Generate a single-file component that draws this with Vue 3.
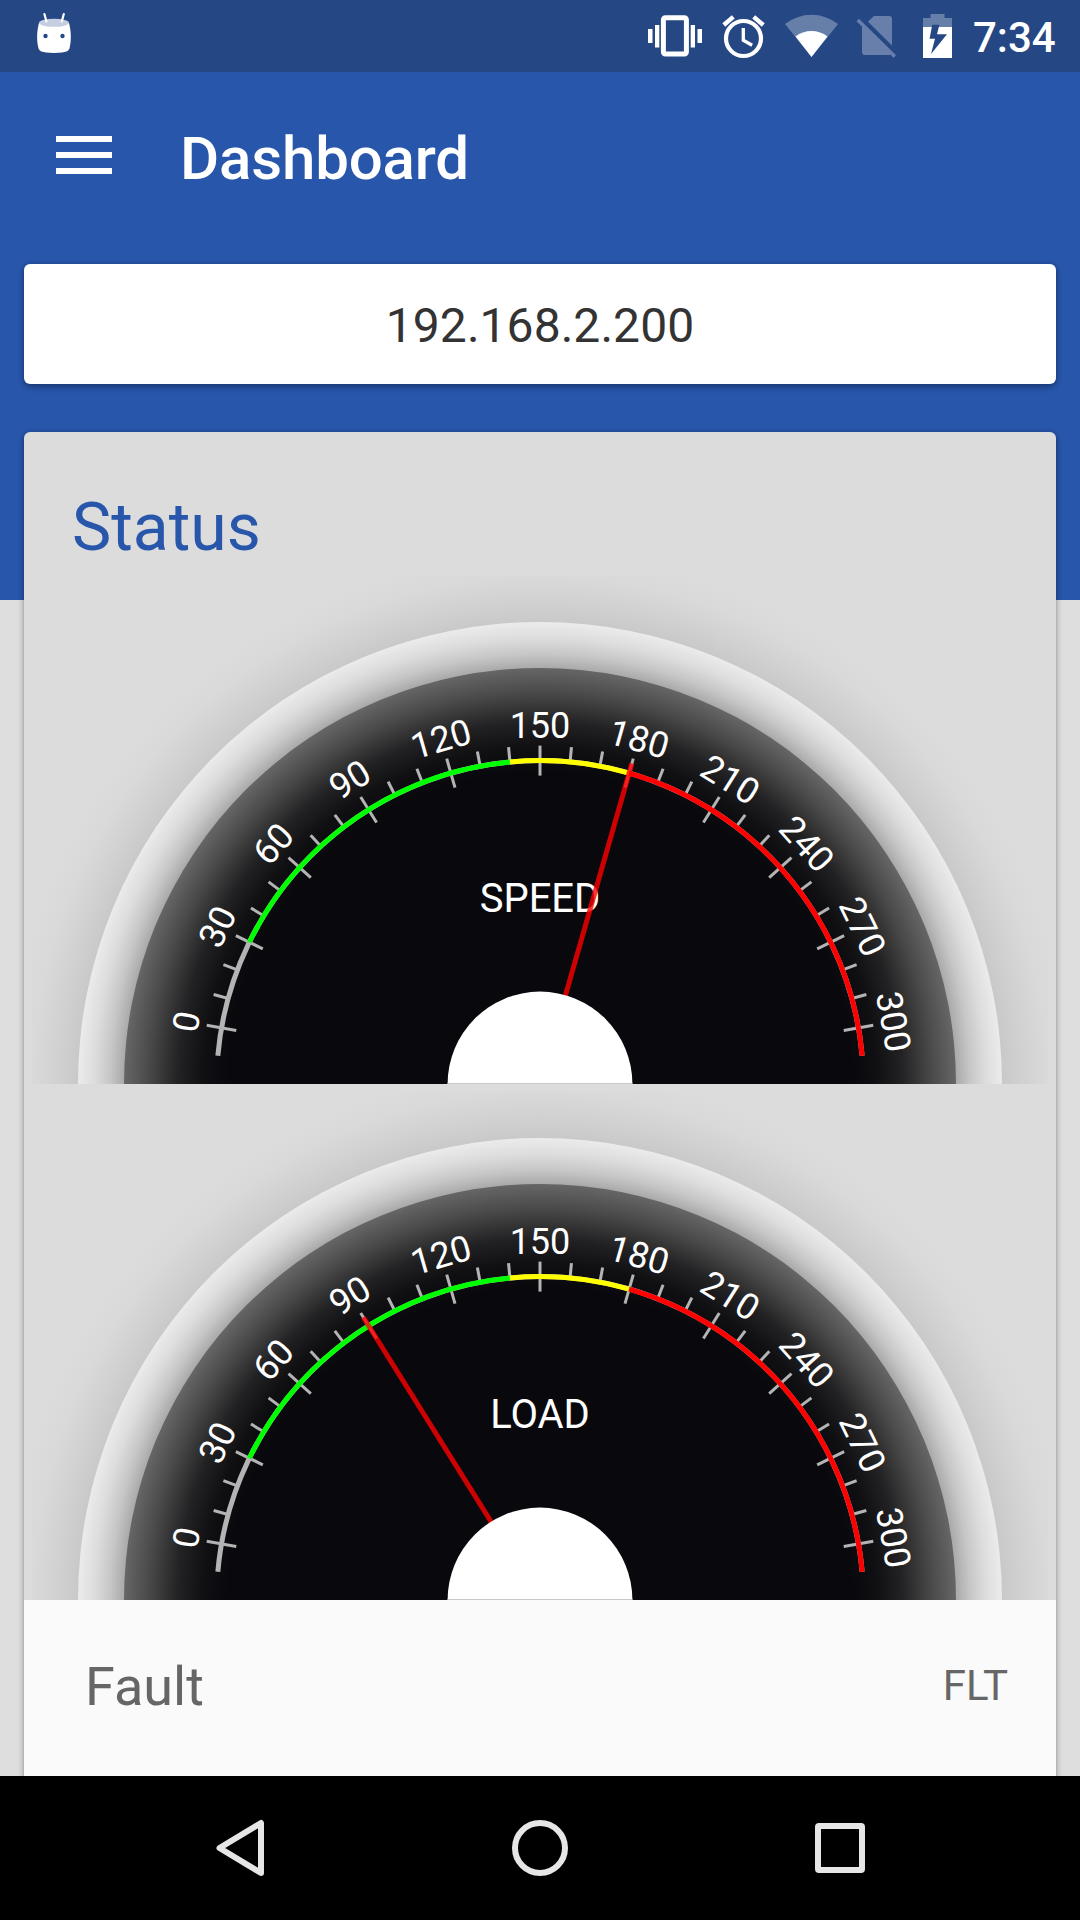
<script setup>
const CX = 516
const CY = 516
const SCALE_R = 323.4
const MAX = 300
const STEP = 10
const MAJOR = 30

const gauges = [
  { label: 'SPEED', value: 180 },
  { label: 'LOAD', value: 90 },
]

const angleOf = (value) => 10 + (value / MAX) * 160

const point = (angle, r) => {
  const a = (angle * Math.PI) / 180
  return { x: CX - Math.cos(a) * r, y: CY - Math.sin(a) * r }
}

const segment = (angle, r1, r2) => {
  const a = point(angle, r1)
  const b = point(angle, r2)
  return { x1: a.x, y1: a.y, x2: b.x, y2: b.y }
}

const arc = (from, to) => {
  const a = point(from, SCALE_R)
  const b = point(to, SCALE_R)
  return `M${a.x} ${a.y} A${SCALE_R} ${SCALE_R} 0 0 1 ${b.x} ${b.y}`
}

const ticks = []
const labels = []
for (let v = 0; v <= MAX; v += STEP) {
  const major = v % MAJOR === 0
  const angle = angleOf(v)
  ticks.push(segment(angle, major ? SCALE_R - 15 : SCALE_R, SCALE_R + 15))
  if (major) labels.push({ text: v, angle: angle - 90 })
}

const ranges = [
  { color: '#b4b4b4', d: arc(5, 175) },
  { color: '#00ff00', d: arc(angleOf(30), angleOf(140)) },
  { color: '#ffff00', d: arc(angleOf(140), angleOf(180)) },
  { color: '#ff0000', d: arc(angleOf(180), 175) },
]
</script>

<template>
  <div class="screen">
    <header class="status-bar">
      <svg class="app-icon" width="36" height="72" viewBox="36 0 36 72">
        <path d="M39 23C37 30 36.400 40 38.300 47.500C39 51 41 52.900 54 52.900S69 51 69.700 47.500C71.600 40 71 30 69 23Z" fill="#fff" />
        <ellipse cx="54" cy="22.800" rx="15" ry="4" fill="#c5cde0" />
        <path d="M44.400 14 46.400 21.500M63.800 14 61.800 21.500" stroke="#fff" stroke-width="2.200" stroke-linecap="round" />
        <circle cx="45.500" cy="36" r="2.200" fill="#254885" />
        <circle cx="62.500" cy="36" r="2.200" fill="#254885" />
      </svg>
      <div class="system">
        <svg class="vibrate" width="54" height="72" viewBox="648 0 54 72" fill="#fff">
          <rect x="663.400" y="17.700" width="23" height="36.300" rx="2" fill="none" stroke="#fff" stroke-width="5" />
          <path d="M648 29h4.500v14H648zM655 25h4.300v22.500H655zM690.700 25h4.300v22.500h-4.300zM697.500 29h4.500v14h-4.500z" />
        </svg>
        <svg class="alarm" width="43" height="72" viewBox="722 0 43 72" fill="none" stroke="#fff">
          <circle cx="743.500" cy="38.500" r="17.500" stroke-width="4.200" />
          <path d="M743.300 28v12.300l8.800 5" stroke-width="3.300" />
          <path d="M723.800 25 733.300 16.800M753.700 16.800 763.300 25" stroke-width="4.400" />
        </svg>
        <svg class="wifi" width="53" height="72" viewBox="785 0 53 72" fill="#fff">
          <path d="M811.500 57 785 24A43 43 0 0 1 838 24Z" opacity=".3" />
          <path d="M811.500 57 795.500 36.500A26 26 0 0 1 827.500 36.500Z" />
        </svg>
        <svg class="sim" width="40" height="72" viewBox="856 0 40 72" fill="#fff" opacity=".3">
          <path d="M873.800 16H889a3 3 0 0 1 3 3V45.500L868 21.800ZM856.500 21.200 859 18.700 896 55.300 893.500 57.800 890.300 54.500 889 55H865a3 3 0 0 1-3-3V26.600Z" />
        </svg>
        <svg class="battery" width="29" height="72" viewBox="923 0 29 72" fill="#fff">
          <path d="M930.500 14h14v4H952v9H938.800l.500-2.200H932.300L931.800 27H923V18h7.500z" opacity=".3" />
          <path fill-rule="evenodd" d="M923 27h29v31h-29zM931.800 27 929.600 38.700 935 38.700 931 54 947 34.300 937 34.300 938.800 27z" />
        </svg>
        <span class="clock">7:34</span>
      </div>
    </header>

    <main class="content">
      <div class="toolbar">
        <div class="menu"><i></i><i></i><i></i></div>
        <h1>Dashboard</h1>
      </div>

      <div class="address">192.168.2.200</div>

      <section class="card">
        <h2>Status</h2>
        <svg v-for="g in gauges" :key="g.label" class="gauge" width="1032" height="516" viewBox="0 0 1032 516">
          <defs>
            <radialGradient :id="'halo-' + g.label" gradientUnits="userSpaceOnUse" :cx="CX" :cy="CY" r="530">
              <stop offset=".872" stop-color="#c9c9c9" />
              <stop offset=".91" stop-color="#d1d1d1" />
              <stop offset=".955" stop-color="#d9d9d9" />
              <stop offset="1" stop-color="#dcdcdc" />
            </radialGradient>
            <radialGradient :id="'rim-' + g.label" gradientUnits="userSpaceOnUse" :cx="CX" :cy="CY" r="462">
              <stop offset=".9" stop-color="#a9a9a9" />
              <stop offset=".93" stop-color="#c6c6c6" />
              <stop offset=".965" stop-color="#dddddd" />
              <stop offset="1" stop-color="#ebebeb" />
            </radialGradient>
            <radialGradient :id="'face-' + g.label" gradientUnits="userSpaceOnUse" :cx="CX" :cy="CY" r="416">
              <stop offset=".75" stop-color="#09080d" />
              <stop offset=".81" stop-color="#101013" />
              <stop offset=".87" stop-color="#222224" />
              <stop offset=".94" stop-color="#494949" />
              <stop offset="1" stop-color="#666" />
            </radialGradient>
          </defs>
          <rect x="7.800" y="7.800" width="1016.400" height="508.200" :fill="`url(#halo-${g.label})`" />
          <circle :cx="CX" :cy="CY" r="462" :fill="`url(#rim-${g.label})`" />
          <circle :cx="CX" :cy="CY" r="416" :fill="`url(#face-${g.label})`" />
          <line v-for="(t, i) in ticks" :key="i" v-bind="t" stroke="#b4b4b4" stroke-width="3" />
          <text
            v-for="l in labels"
            :key="l.text"
            class="tick-label"
            :x="CX"
            :y="CY - 346.4"
            :transform="`rotate(${l.angle} ${CX} ${CY})`"
          >{{ l.text }}</text>
          <path v-for="r in ranges" :key="r.color" :d="r.d" fill="none" :stroke="r.color" stroke-width="5" />
          <text class="gauge-label" :x="CX" y="344">{{ g.label }}</text>
          <line v-bind="segment(angleOf(g.value), 80, 333.4)" stroke="#ff0000" stroke-opacity=".8" stroke-width="5" />
          <circle :cx="CX" :cy="CY" r="92.400" fill="#fff" />
          <rect x="423.600" y="515" width="184.800" height="1" fill="#c8c8c8" />
        </svg>
        <div class="row">
          <span class="name">Fault</span>
          <span class="value">FLT</span>
        </div>
      </section>
    </main>

    <nav class="nav-bar">
      <svg width="60" height="60" viewBox="210 1818 60 60">
        <path d="M219.500 1848 261 1823V1873Z" />
      </svg>
      <svg width="60" height="60" viewBox="510 1818 60 60">
        <circle cx="540" cy="1848" r="25" />
      </svg>
      <svg width="60" height="60" viewBox="810 1818 60 60">
        <rect x="818" y="1826" width="44" height="44" rx="1" />
      </svg>
    </nav>
  </div>
</template>

<style>
body {
  margin: 0;
  background: #dedede;
}
</style>

<style scoped>
.screen {
  width: 1080px;
  height: 1920px;
  display: flex;
  flex-direction: column;
  overflow: hidden;
  font-family: Roboto, "Liberation Sans", sans-serif;
}
.status-bar {
  flex: none;
  height: 72px;
  background: #254885;
  display: flex;
  justify-content: space-between;
  padding: 0 24px 0 36px;
}
svg {
  display: block;
  flex: none;
}
.system {
  display: flex;
}
.alarm,
.wifi {
  margin-left: 20px;
}
.sim {
  margin-left: 18px;
}
.battery {
  margin-left: 27px;
}
.clock {
  width: 83px;
  margin-left: 21px;
  line-height: 75px;
  font-size: 42px;
  font-weight: 500;
  color: #fff;
  white-space: nowrap;
}
.content {
  flex: none;
  height: 1704px;
  box-sizing: border-box;
  padding: 0 24px;
  overflow: hidden;
  background: linear-gradient(#2856ab 528px, #dedede 528px);
}
.toolbar {
  height: 168px;
  margin-bottom: 24px;
  padding-left: 32px;
  display: flex;
}
.menu {
  width: 56px;
  padding-top: 64px;
  display: flex;
  flex-direction: column;
  gap: 10px;
}
.menu i {
  height: 6px;
  background: #fff;
}
h1 {
  margin: 0 0 0 68px;
  font-size: 60px;
  font-weight: 500;
  line-height: 173px;
  letter-spacing: -0.15px;
  color: #fff;
}
.address {
  height: 120px;
  line-height: 124px;
  border-radius: 6px;
  background: #fff;
  box-shadow: 0 3px 6px rgba(0, 0, 0, 0.3), 0 0 4px rgba(0, 0, 0, 0.15);
  text-align: center;
  font-size: 48px;
  letter-spacing: 0.05px;
  color: #333;
}
.card {
  margin-top: 48px;
  height: 1400px;
  border-radius: 6px;
  background: #fafafa linear-gradient(#dcdcdc, #dcdcdc) 0 0 / 100% 1168px no-repeat;
  box-shadow: 0 3px 6px rgba(0, 0, 0, 0.3), 0 0 4px rgba(0, 0, 0, 0.15);
}
h2 {
  margin: 0;
  height: 136px;
  padding-left: 48px;
  font-size: 66px;
  font-weight: 400;
  line-height: 191px;
  color: #2856ab;
}
.tick-label {
  font-size: 36px;
  fill: #fff;
  text-anchor: middle;
}
.gauge-label {
  font-size: 40px;
  fill: #fff;
  text-anchor: middle;
}
.row {
  height: 176px;
  padding: 0 48px 0 61px;
  display: flex;
  justify-content: space-between;
  color: #666;
}
.name {
  font-size: 54px;
  line-height: 173px;
}
.value {
  font-size: 42px;
  line-height: 171px;
}
.nav-bar {
  flex: none;
  height: 144px;
  background: #000;
  display: flex;
  align-items: center;
  justify-content: center;
  gap: 240px;
}
.nav-bar svg {
  fill: none;
  stroke: #e6e6e6;
  stroke-width: 6;
  stroke-linejoin: round;
}
</style>
